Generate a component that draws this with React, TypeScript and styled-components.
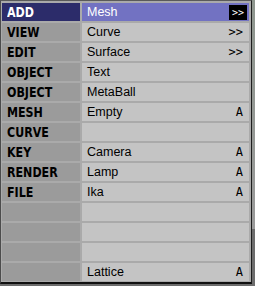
import styled, { createGlobalStyle } from 'styled-components'

const GlobalStyle = createGlobalStyle`
  html, body {
    margin: 0;
    padding: 0;
    background: #8c8c8c;
    overflow: hidden;
  }
`

type Row = {
  head?: string
  item?: string
  hint?: string
  active?: boolean
}

const rows: Row[] = [
  { head: 'ADD', item: 'Mesh', hint: '>>', active: true },
  { head: 'VIEW', item: 'Curve', hint: '>>' },
  { head: 'EDIT', item: 'Surface', hint: '>>' },
  { head: 'OBJECT', item: 'Text' },
  { head: 'OBJECT', item: 'MetaBall' },
  { head: 'MESH', item: 'Empty', hint: 'A' },
  { head: 'CURVE' },
  { head: 'KEY', item: 'Camera', hint: 'A' },
  { head: 'RENDER', item: 'Lamp', hint: 'A' },
  { head: 'FILE', item: 'Ika', hint: 'A' },
  {},
  {},
  {},
  { item: 'Lattice', hint: 'A' },
]

function App () {
  return (
    <Screen>
      <GlobalStyle />
      <Menu>
        {rows.map((row, i) => (
          <Line key={i}>
            <Head $active={row.active}>
              <HeadText>{row.head}</HeadText>
            </Head>
            <Item $active={row.active}>
              <span>{row.item}</span>
              {row.hint && <Hint $boxed={row.active}>{row.hint}</Hint>}
            </Item>
          </Line>
        ))}
      </Menu>
    </Screen>
  )
}

const Screen = styled.div`
  width: 255px;
  height: 286px;
  background: linear-gradient(#8e968e, #9a9a9a 80%, #6c6c6c 80%);
`

const Menu = styled.div`
  width: 249px;
  height: 279px;
  padding: 2px 0 0 1px;
  background: #aaaaaa;
  border-top: 1px solid #5a5a5a;
  border-left: 1px solid #4c4c4c;
  border-right: 1px solid #1e1e1e;
  border-bottom: 2px solid #101010;
  display: flex;
  flex-direction: column;
  gap: 2px;
  box-sizing: content-box;
`

const Line = styled.div`
  display: grid;
  grid-template-columns: 78px 167px;
  column-gap: 2px;
  height: 18px;
`

const Head = styled.div<{ $active?: boolean }>`
  background: ${p => (p.$active ? '#2c2c6a' : '#9b9b9b')};
  color: ${p => (p.$active ? '#ffffff' : '#000000')};
  padding-left: 5px;
  overflow: hidden;
`

const HeadText = styled.span`
  display: inline-block;
  font-family: "DejaVu Sans Condensed", "DejaVu Sans", sans-serif;
  font-weight: 700;
  font-size: 14px;
  line-height: 18px;
  transform: scaleX(0.88);
  transform-origin: left center;
`

const Item = styled.div<{ $active?: boolean }>`
  background: ${p => (p.$active ? '#7272c2' : '#c4c4c4')};
  color: ${p => (p.$active ? '#ffffff' : '#000000')};
  font-family: "Liberation Sans", Arial, sans-serif;
  font-size: 12.5px;
  line-height: 18px;
  padding: 0 4px 0 5px;
  display: flex;
  align-items: center;
  justify-content: space-between;
`

const Hint = styled.span<{ $boxed?: boolean }>`
  font-family: "DejaVu Sans Mono", monospace;
  font-size: ${p => (p.$boxed ? '10px' : '12px')};
  line-height: 15px;
  height: 15px;
  padding: 0 3px;
  margin-right: ${p => (p.$boxed ? '-2px' : '-1px')};
  background: ${p => (p.$boxed ? '#000000' : 'transparent')};
  color: ${p => (p.$boxed ? '#ffffff' : '#000000')};
`

export default App
